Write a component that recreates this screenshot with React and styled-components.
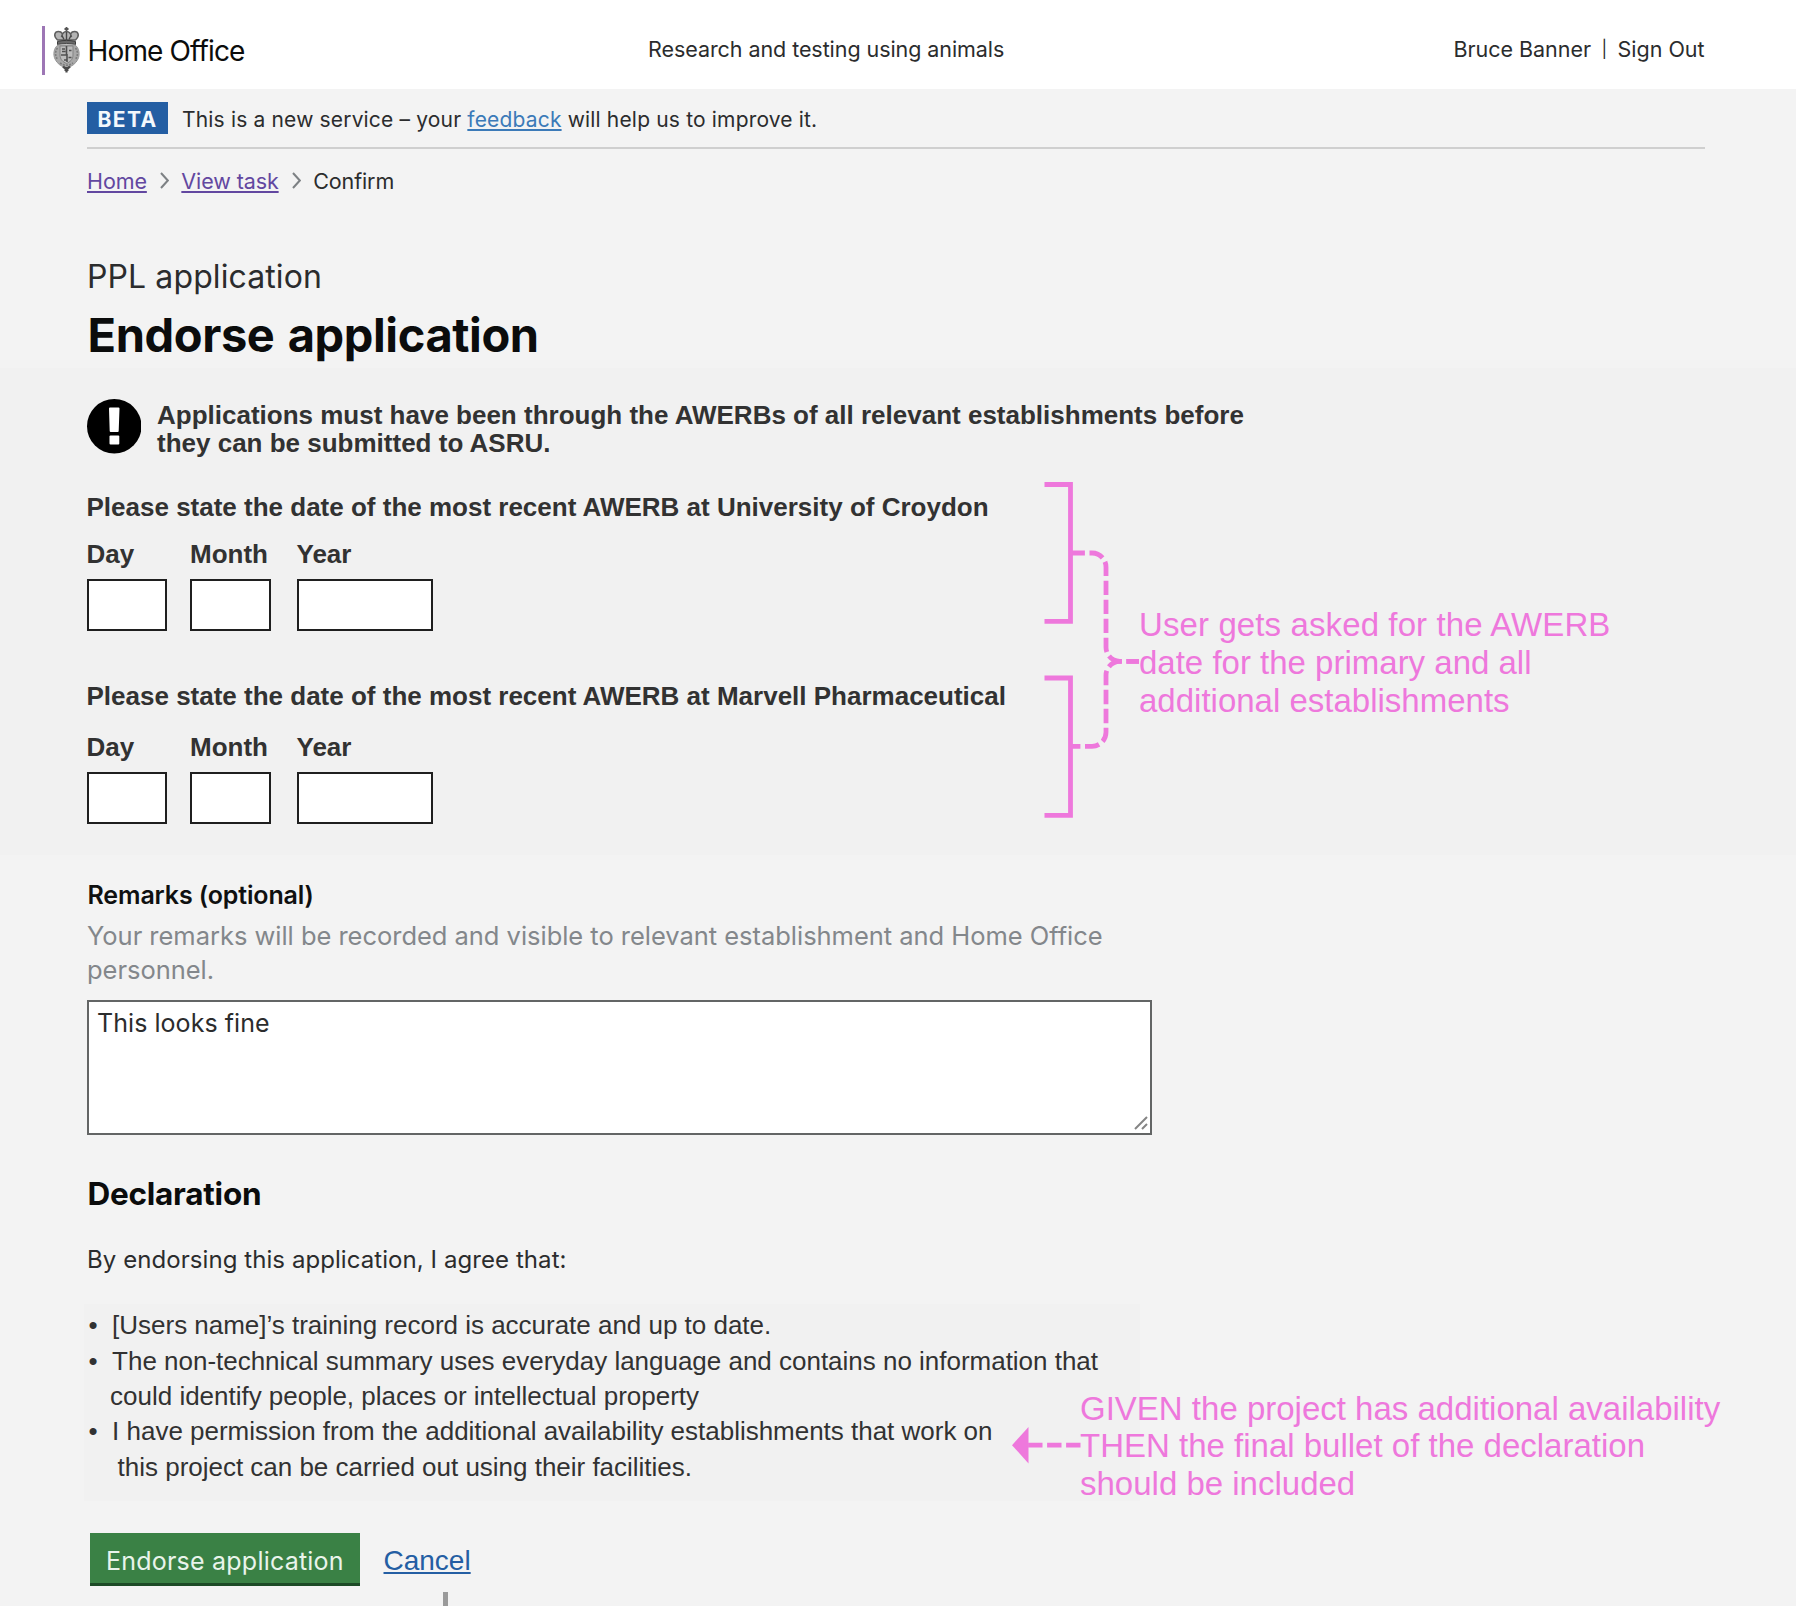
import React from 'react';
import styled, { createGlobalStyle } from 'styled-components';

const inter = 'Inter, "Noto Sans", sans-serif';
const arial = '"Liberation Sans", Arial, sans-serif';
const pink = '#ee78dc';

const GlobalStyle = createGlobalStyle`
  *, *::before, *::after { box-sizing: border-box; }
  body { margin: 0; background: #f3f3f3; }
  h1, h2, p, ul { margin: 0; padding: 0; font-weight: inherit; }
`;

const Page = styled.div`
  position: relative;
  width: 1796px;
  height: 1606px;
  overflow: hidden;
  background: #f3f3f3;
  color: #2b2c2d;
  font-family: ${inter};
`;

/* Header */
const Header = styled.header`
  display: grid;
  grid-template-columns: 606px 1fr auto;
  height: 89px;
  padding: 26px 91.5px 0 42px;
  background: #fff;
`;
const Brand = styled.div`
  display: flex;
  align-items: flex-start;
  height: 49px;
  padding-left: 8px;
  border-left: 3px solid #9d76b5;
`;
const BrandName = styled.span`
  margin: 5px 0 0 7.5px;
  font-size: 28px;
  line-height: 40px;
  letter-spacing: -0.86px;
  color: #0b0c0c;
`;
const HeaderText = styled.div`
  display: flex;
  gap: ${(p) => p.$gap || 0}px;
  margin-top: 8px;
  font-size: 21.5px;
  line-height: 30px;
  letter-spacing: ${(p) => p.$spacing || 0}px;
  white-space: pre;
`;
const Pipe = styled.span`
  font-size: 17px;
`;

/* Phase banner and breadcrumbs */
const PhaseBanner = styled.div`
  display: flex;
  height: 60px;
  margin: 0 91px 0 87px;
  padding-top: 13px;
  border-bottom: 2px solid #cfcfcf;
`;
const PhaseTag = styled.strong`
  width: 81px;
  height: 32px;
  padding-left: 10.5px;
  background: #245ea3;
  color: #f4f8fc;
  font-size: 21px;
  font-weight: 700;
  line-height: 36px;
  letter-spacing: 1.4px;
`;
const PhaseText = styled.p`
  margin-left: 14px;
  font-size: 21px;
  line-height: 36px;
  letter-spacing: 0.17px;
`;
const Link = styled.a`
  color: ${(p) => p.$color};
  text-decoration: underline;
  text-decoration-thickness: 2px;
  text-underline-offset: ${(p) => p.$offset || 2}px;
  text-decoration-skip-ink: none;
`;
const Crumbs = styled.nav`
  display: flex;
  align-items: flex-start;
  margin: 17px 0 0 87px;
  font-size: 21.5px;
  line-height: 30px;
  letter-spacing: -0.1px;
`;
const Chevron = styled.svg`
  width: 9px;
  height: 17px;
  margin: 6px 12px 0 13.5px;
`;

/* Titles */
const Caption = styled.p`
  margin: 61px 0 0 87px;
  font-size: 32px;
  line-height: 40px;
  letter-spacing: 0.1px;
`;
const Title = styled.h1`
  height: 61.5px;
  margin: 9.5px 0 0 87.5px;
  color: #0b0c0c;
  font-size: 47px;
  font-weight: 700;
  line-height: 56px;
  letter-spacing: -0.4px;
  word-spacing: 2.5px;
`;

/* AWERB dates */
const DatesBand = styled.section`
  height: 487px;
  padding: 31px 0 0 86.5px;
  background: #f1f1f1;
  color: #323232;
  font-family: ${arial};
  font-size: 26px;
  font-weight: 700;
`;
const Alert = styled.div`
  display: flex;
  gap: 16.5px;
  height: 54.5px;
`;
const AlertIcon = styled.svg`
  width: 54.5px;
  height: 54.5px;
`;
const AlertText = styled.p`
  margin: 1.5px 0 0 -0.5px;
  line-height: 28px;
`;
const DateGroup = styled.div`
  margin-top: ${(p) => p.$top}px;
`;
const DateLegend = styled.p`
  line-height: 30px;
`;
const DateFields = styled.div`
  display: grid;
  grid-template-columns: 80px 81px 138.5px;
  column-gap: 23.5px;
  margin-top: ${(p) => p.$top}px;
  > :nth-child(3) { margin-left: 2px; }
`;
const DateField = styled.label`
  display: block;
  line-height: 30px;
`;
const DateInput = styled.span`
  display: block;
  height: 52px;
  margin-top: 10px;
  border: 2px solid #1f1f1f;
  background: #fff;
`;

/* Remarks */
const RemarksLabel = styled.h2`
  margin: 25px 0 0 87.5px;
  color: #0f1010;
  font-size: 25px;
  font-weight: 600;
  line-height: 30px;
  letter-spacing: -0.13px;
`;
const Hint = styled.p`
  margin: 9px 0 0 87px;
  color: #83878b;
  font-size: 25.5px;
  line-height: 33.6px;
  letter-spacing: -0.028px;
`;
const RemarksBox = styled.div`
  display: flex;
  justify-content: space-between;
  align-items: flex-end;
  width: 1065px;
  height: 135px;
  margin: 13.8px 0 0 87px;
  padding: 6px 2px 3px 8px;
  border: 2px solid #636565;
  background: #fff;
`;
const RemarksText = styled.span`
  align-self: flex-start;
  font-size: 25px;
  line-height: 30px;
  letter-spacing: 0.05px;
`;

/* Declaration */
const DeclarationTitle = styled.h2`
  margin: 39px 0 0 87.5px;
  color: #0b0c0c;
  font-size: 31.5px;
  font-weight: 700;
  line-height: 40px;
  letter-spacing: -0.25px;
`;
const Intro = styled.p`
  margin: 31px 0 0 87px;
  font-size: 24px;
  line-height: 30px;
  letter-spacing: 0.07px;
`;
const DeclarationList = styled.ul`
  width: 1056px;
  height: 197px;
  margin: 29px 0 0 84px;
  padding: 4.2px 0 0 4.5px;
  background: #f1f1f1;
  color: #323232;
  font-family: ${arial};
  font-size: 26px;
  line-height: 35.4px;
  list-style: none;
`;
const DeclarationItem = styled.li`
  display: flex;
  gap: 14.5px;
  letter-spacing: -0.015px;
  &::before { content: '•'; }
`;
const Line = styled.span`
  display: block;
  margin-left: ${(p) => p.$shift || 0}px;
`;
const Actions = styled.div`
  display: flex;
  gap: 24px;
  margin: 32px 0 0 89.5px;
`;
const SubmitButton = styled.button`
  width: 270px;
  height: 53px;
  padding: 3px 0 0 16.5px;
  border: 0;
  border-bottom: 3px solid #1c4a26;
  background: #3a8145;
  color: #e9f4eb;
  font-family: ${inter};
  font-size: 25px;
  line-height: 50px;
  letter-spacing: 0.22px;
  text-align: left;
`;
const Cancel = styled.div`
  font-family: ${arial};
  font-size: 28px;
  line-height: 56px;
`;

/* Review notes laid over the page */
const Note = styled.p`
  position: absolute;
  left: ${(p) => p.$left}px;
  top: ${(p) => p.$top}px;
  color: ${pink};
  font-family: ${arial};
  font-size: 33px;
  line-height: ${(p) => p.$leading}px;
  white-space: nowrap;
`;
const NoteLead = styled.span`
  letter-spacing: 0.11px;
`;
const Connectors = styled.svg`
  position: absolute;
  left: 1000px;
  top: ${(p) => p.$top}px;
  pointer-events: none;
`;
const Stub = styled.div`
  position: absolute;
  left: 443px;
  bottom: 0;
  width: 5px;
  height: 14px;
  background: #9a9a9a;
`;

const Crest = () => (
  <svg width="27" height="48" viewBox="0 0 27 48" fill="none">
    <path d="M13.5 1v5M11.5 3h4" stroke="#555" strokeWidth="1.8" />
    <path d="M4.5 14C0 10 1.500 5.500 5.500 5.500c4 0 4.500 3.500 3 5.500 1-5 4-5.500 5-5.500s4 .5 5 5.500c-1.500-2-1-5.500 3-5.500s5.500 4.500 1 8.500z" fill="#b4b4b4" stroke="#5e5e5e" strokeWidth="1.500" />
    <path d="M13.500 6v8M9 9.500l2 4M18 9.500l-2 4" stroke="#484848" strokeWidth="1.400" />
    <path d="M4.500 15.500c6-1.500 12-1.500 18 0v3c-6-1.200-12-1.200-18 0z" fill="#6a6a6a" stroke="#3c3c3c" strokeWidth="1" />
    <path d="M5 19C.5 22 0 29 2 33c2 4.500 6 7.500 11.500 9C19 40.500 23 37.500 25 33c2-4 1.500-11-3-14z" fill="#a9a9a9" stroke="#969696" />
    <path d="M4.500 22C2 25 2 30 4.500 33.500M22.500 22c2.500 3 2.500 8 0 11.500M7 37c4 3 9 3 13 0" stroke="#7d7d7d" strokeWidth="1.600" strokeDasharray="2 1.200" />
    <path d="M7 20h13v9c0 4.500-3 7-6.500 8.500C10 36 7 33.500 7 29z" fill="#bcbcbc" stroke="#838383" />
    <path d="M13.500 20v9M9 23h3M9 25.500h3.500M16 24.500h2.500M14 28v8M8 29h6M15.500 31.500h3M11 34h3" stroke="#505050" strokeWidth="1.600" />
    <path d="M10 40.500c2 2.500 5 2.500 7 0M13.500 41v5.500M11.500 44h4" stroke="#4a4a4a" strokeWidth="2.200" />
  </svg>
);

const Separator = () => (
  <Chevron viewBox="0 0 9 17">
    <path d="M1 1l6.800 7.500L1 16" fill="none" stroke="#7d8184" strokeWidth="2" />
  </Chevron>
);

const DateQuestion = ({ establishment, top, fieldsTop }) => (
  <DateGroup $top={top}>
    <DateLegend>Please state the date of the most recent AWERB at {establishment}</DateLegend>
    <DateFields $top={fieldsTop}>
      {['Day', 'Month', 'Year'].map((name) => (
        <DateField key={name}>
          {name}
          <DateInput />
        </DateField>
      ))}
    </DateFields>
  </DateGroup>
);

export default function App() {
  return (
    <Page>
      <GlobalStyle />
      <Header>
        <Brand>
          <Crest />
          <BrandName>Home Office</BrandName>
        </Brand>
        <HeaderText $spacing={-0.066}>Research and testing using animals</HeaderText>
        <HeaderText $gap={10.5} $spacing={-0.03}>
          <span>Bruce Banner</span>
          <Pipe>|</Pipe>
          <span>Sign Out</span>
        </HeaderText>
      </Header>

      <PhaseBanner>
        <PhaseTag>BETA</PhaseTag>
        <PhaseText>
          This is a new service – your <Link $color="#3b7ab8">feedback</Link> will help us to improve it.
        </PhaseText>
      </PhaseBanner>
      <Crumbs>
        <Link $color="#6247a0">Home</Link>
        <Separator />
        <Link $color="#6247a0">View task</Link>
        <Separator />
        <span>Confirm</span>
      </Crumbs>

      <Caption>PPL application</Caption>
      <Title>Endorse application</Title>

      <DatesBand>
        <Alert>
          <AlertIcon viewBox="0 0 54.500 54.500">
            <circle cx="27.250" cy="27.250" r="27.250" fill="#000" />
            <path d="M22 9.500q0-1 1-1h8.500q1 0 1 1l-.8 22.500q0 1-1 1h-7q-1 0-1-1z" fill="#fff" />
            <rect x="22.500" y="36.500" width="9.800" height="9" rx="1" fill="#fff" />
          </AlertIcon>
          <AlertText>
            Applications must have been through the AWERBs of all relevant establishments before
            <br />
            they can be submitted to ASRU.
          </AlertText>
        </Alert>
        <DateQuestion establishment="University of Croydon" top={38} fieldsTop={17} />
        <DateQuestion establishment="Marvell Pharmaceutical" top={50} fieldsTop={21.5} />
      </DatesBand>

      <RemarksLabel>Remarks (optional)</RemarksLabel>
      <Hint>
        Your remarks will be recorded and visible to relevant establishment and Home Office
        <br />
        personnel.
      </Hint>
      <RemarksBox>
        <RemarksText>This looks fine</RemarksText>
        <svg width="14" height="14" viewBox="0 0 14 14">
          <path d="M1 13L13 1M8 13l5-5" stroke="#858585" strokeWidth="2" />
        </svg>
      </RemarksBox>

      <DeclarationTitle>Declaration</DeclarationTitle>
      <Intro>By endorsing this application, I agree that:</Intro>
      <DeclarationList>
        <DeclarationItem>
          <Line>[Users name]’s training record is accurate and up to date.</Line>
        </DeclarationItem>
        <DeclarationItem>
          <div>
            <Line>The non-technical summary uses everyday language and contains no information that</Line>
            <Line $shift={-2}>could identify people, places or intellectual property</Line>
          </div>
        </DeclarationItem>
        <DeclarationItem>
          <div>
            <Line>I have permission from the additional availability establishments that work on</Line>
            <Line $shift={5.5}>this project can be carried out using their facilities.</Line>
          </div>
        </DeclarationItem>
      </DeclarationList>
      <Actions>
        <SubmitButton>Endorse application</SubmitButton>
        <Cancel>
          <Link $color="#245ea3">Cancel</Link>
        </Cancel>
      </Actions>

      <Connectors $top={470} width="150" height="360" viewBox="1000 470 150 360" fill="none" stroke={pink} strokeWidth="4.800">
        <path d="M1044.500 484.500H1070.500V621.300H1044.500M1044.500 678H1070.500V815.300H1044.500" />
        <path d="M1070.500 553H1092A14 14 0 0 1 1106 567V647.300A14 14 0 0 0 1120 661.300H1139" strokeDasharray="14.400 4.600" />
        <path d="M1070.500 746.300H1092A14 14 0 0 0 1106 732.300V675.300A14 14 0 0 1 1120 661.300H1139" strokeDasharray="14.400 4.600" strokeDashoffset="4.500" />
      </Connectors>
      <Note $left={1139} $top={606} $leading={38}>
        <NoteLead>User gets asked for the AWERB</NoteLead>
        <br />
        date for the primary and all
        <br />
        additional establishments
      </Note>

      <Connectors $top={1420} width="90" height="50" viewBox="1000 1420 90 50" fill="none" stroke={pink} strokeWidth="4.800">
        <path d="M1080.500 1445.200H1028" strokeDasharray="14.400 4.600" />
        <path d="M1012 1445.200L1028.500 1427V1463.400Z" fill={pink} stroke="none" />
      </Connectors>
      <Note $left={1080} $top={1390} $leading={37.4}>
        GIVEN the project has additional availability
        <br />
        THEN the final bullet of the declaration
        <br />
        should be included
      </Note>
      <Stub />
    </Page>
  );
}
